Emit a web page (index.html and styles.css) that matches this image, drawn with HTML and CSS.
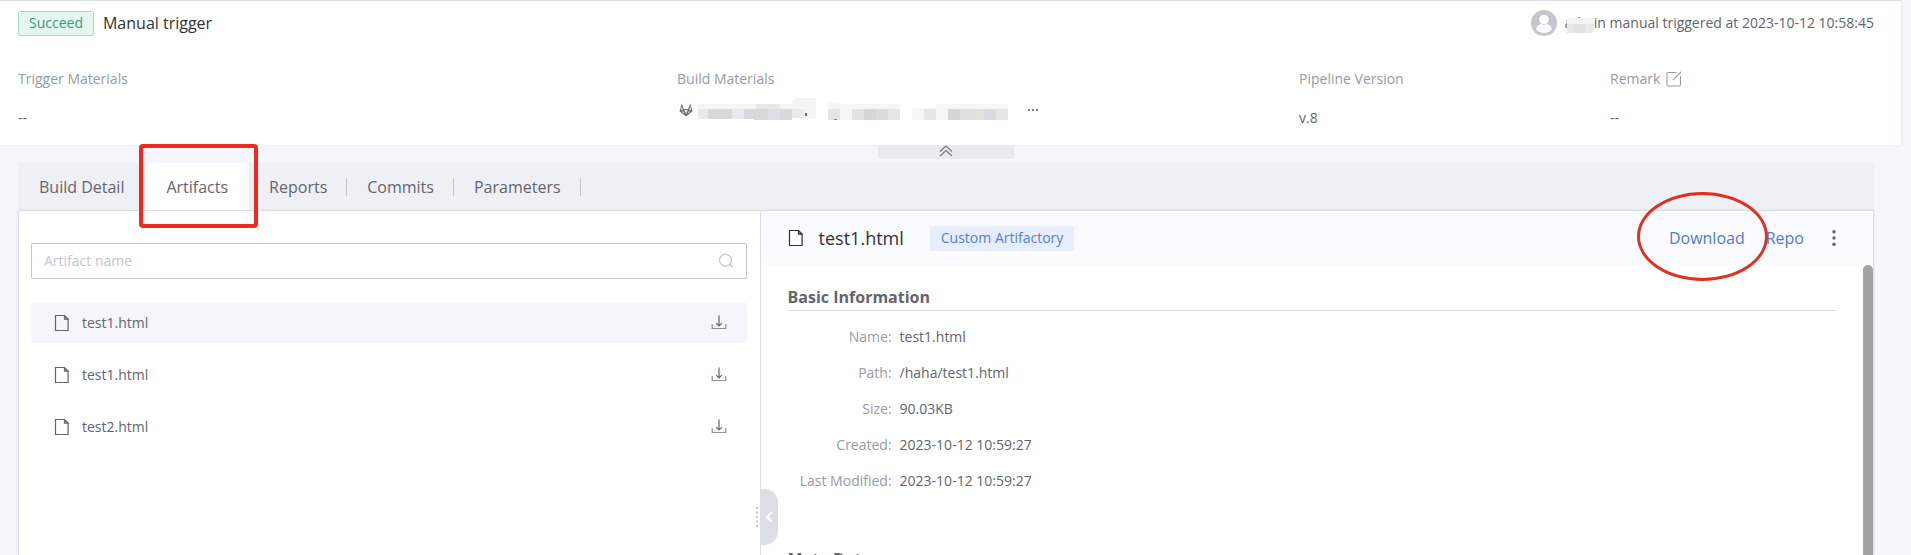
FILE: index.html
```html
<!DOCTYPE html>
<html lang="en">
<head>
<meta charset="utf-8">
<title>Build artifacts</title>
<link rel="stylesheet" href="styles.css">
</head>
<body>
<svg class="sprite" aria-hidden="true">
  <symbol id="file" viewBox="0 0 16 18"><path d="M1.500 1.500h9l3.600 3.600v11.400H1.500z" fill="none" stroke="currentColor" stroke-width="1.200"/><path d="M10.400 1.500v3.800h3.900z" fill="currentColor" fill-opacity=".6" stroke="currentColor" stroke-width="1"/></symbol>
  <symbol id="save" viewBox="0 0 16 16"><path d="M1.200 9v4.500h13.600V9" fill="none" stroke="currentColor" stroke-opacity=".7" stroke-width="1.200"/><path d="M8 .5v10.500M5.200 8.200 8 11l2.800-2.800" fill="none" stroke="currentColor" stroke-width="1.200"/></symbol>
</svg>
<header class="summary">
  <div class="summary-head">
    <span class="status">Succeed</span>
    <h1 class="title">Manual trigger</h1>
    <div class="user">
      <svg class="avatar" viewBox="0 0 26 26" aria-hidden="true"><circle cx="13" cy="13" r="13" fill="#c4c6cc"/><circle cx="13" cy="9.500" r="4.800" fill="#fff"/><path d="M5.300 19.500c0-4 3.200-5.300 5.200-5.300 1.500 1 3.500 1 5 0 2 0 5.200 1.300 5.200 5.300-2 2.300-4.700 3.400-7.700 3.400s-5.700-1.100-7.700-3.400z" fill="#fff"/></svg>
      <span class="user-text">admin manual triggered at 2023-10-12 10:58:45
        <svg class="name-mask" viewBox="0 0 27 15" aria-hidden="true"><path fill="#f4f4f5" d="M0 0h27v6H0z"/><path fill="#e9e9ea" d="M0 6h6v9H0zM18 6h9v7l-3 2h-6z"/><path fill="#e2e2e3" d="M6 6h12v9H6z"/></svg>
      </span>
    </div>
  </div>
  <dl class="facts">
    <div class="fact"><dt>Trigger Materials</dt><dd>--</dd></div>
    <div class="fact"><dt>Build Materials</dt>
      <dd class="repos">
        <svg class="fox" viewBox="0 0 14 14" aria-hidden="true"><path d="M2.800.5.500 8.200 7 13.500l6.500-5.300L11.200.5 9.200 6H4.800z" fill="#6c6e78"/><path d="M2.800 3.200 1.900 7l2 .3zM11.200 3.200l.9 3.800-2 .3zM5.200 7h3.600L7 11zM2.300 8.500l2 .1 1.300 2zM11.700 8.500l-2 .1-1.300 2z" fill="#e4e4e8"/></svg>
        <svg class="mosaic" viewBox="0 0 310 23" aria-hidden="true">
          <path fill="#f4f5f5" d="M0 6h94V3l4-3h20v21h-10l-2-1H0z"/><path fill="#e9e9ea" d="M0 11h10v10H0zM94 11h12v9H94z"/><path fill="#d8d8da" d="M10 11h24v10H10zM46 11h24v11H56l-1-1h-9zM82 11h12v11H82z"/><path fill="#e5eaed" d="M34 11h12v10H34z"/><path fill="#dcdfe5" d="M70 11h12v11H70z"/><path fill="#e9e8e7" d="M58 6h24v5H58z"/><path fill="#74666a" d="M107 15h2v3h-2z"/>
          <path fill="#f6f6f6" d="M130 4h12v2h60v16h-72z"/><path fill="#e4e5e7" d="M130 11h12v11h-12zM190 11h12v11h-12z"/><path fill="#e4e1de" d="M154 11h12v11h-12z"/><path fill="#d5d6da" d="M166 11h12v11h-12z"/><path fill="#dadbdd" d="M178 11h12v11h-12z"/><path fill="#88888c" d="M136 21h3v1h-3z"/>
          <path fill="#f6f6f6" d="M214 10h24V6h72v16h-96z"/><path fill="#e6e6e8" d="M226 11h12v11h-12zM298 11h12v11h-12z"/><path fill="#d6d6d9" d="M250 11h12v11h-12z"/><path fill="#dfe0e2" d="M262 11h12v11h-12z"/><path fill="#e3e0dd" d="M274 11h12v11h-12z"/><path fill="#d9dbe1" d="M286 11h12v11h-12z"/>
        </svg>
        <svg class="dots" viewBox="0 0 10 2" aria-hidden="true"><path fill="#7d7f88" d="M0 0h2v2H0zM4 0h2v2H4zM8 0h2v2H8z"/></svg>
      </dd></div>
    <div class="fact"><dt>Pipeline Version</dt><dd>v.8</dd></div>
    <div class="fact"><dt>Remark
      <button class="icon-button" aria-label="Edit remark"><svg class="edit" viewBox="0 0 16 16"><path d="M10.500 1.500H2.500a1.500 1.500 0 0 0-1.500 1.500v10.500A1.500 1.500 0 0 0 2.500 15h10.500a1.500 1.500 0 0 0 1.500-1.500V5M7 9.200 15 1" fill="none" stroke="currentColor" stroke-width="1.100"/></svg></button></dt><dd>--</dd></div>
  </dl>
</header>
<button class="fold" aria-label="Collapse summary"><svg class="chevrons" viewBox="0 0 14 12"><path d="M1 6.500 7 1l6 5.500M1 11 7 5.500 13 11" fill="none" stroke="currentColor" stroke-width="1.100"/></svg></button>
<main class="content">
  <nav class="tabs">
    <button class="tab">Build Detail</button>
    <button class="tab active">Artifacts</button>
    <button class="tab divided">Reports</button>
    <button class="tab divided">Commits</button>
    <button class="tab divided">Parameters</button>
  </nav>
  <div class="panes">
    <section class="list-pane">
      <label class="search">
        <input type="text" placeholder="Artifact name" aria-label="Artifact name">
        <svg class="search-icon" viewBox="0 0 16 16" aria-hidden="true"><circle cx="7.500" cy="7.200" r="6" fill="none" stroke="#c4c6cc" stroke-width="1.200"/><path d="m11.800 11.500 2.500 2.500" stroke="#c4c6cc" stroke-width="1.600"/></svg>
      </label>
      <ul class="files">
        <li class="file selected"><svg class="file-icon"><use href="#file"/></svg><span class="file-name">test1.html</span><button class="icon-button" aria-label="Download test1.html"><svg class="save"><use href="#save"/></svg></button></li>
        <li class="file"><svg class="file-icon"><use href="#file"/></svg><span class="file-name">test1.html</span><button class="icon-button" aria-label="Download test1.html"><svg class="save"><use href="#save"/></svg></button></li>
        <li class="file"><svg class="file-icon"><use href="#file"/></svg><span class="file-name">test2.html</span><button class="icon-button" aria-label="Download test2.html"><svg class="save"><use href="#save"/></svg></button></li>
      </ul>
    </section>
    <section class="detail-pane">
      <button class="handle" aria-label="Collapse list"><svg class="grip" viewBox="0 0 2 20"><path d="M1 0v20" stroke="#c4c6cc" stroke-width="2" stroke-dasharray="2 2.500"/></svg><svg class="arrow" viewBox="0 0 8 12"><path d="M6.500 1.500 2 6l4.500 4.500" fill="none" stroke="#fff" stroke-width="2"/></svg></button>
      <div class="detail-head">
        <svg class="file-icon"><use href="#file"/></svg>
        <h2 class="detail-title">test1.html</h2>
        <span class="tag">Custom Artifactory</span>
        <div class="actions">
          <a class="action marked" href="#download">Download</a>
          <a class="action" href="#repo">Repo</a>
          <button class="icon-button more" aria-label="More"><svg class="kebab" viewBox="0 0 4 16"><circle cx="2" cy="1.700" r="1.700"/><circle cx="2" cy="8" r="1.700"/><circle cx="2" cy="14.300" r="1.700"/></svg></button>
        </div>
      </div>
      <div class="detail-scroll">
        <div class="detail-body">
          <h3 class="section-title">Basic Information</h3>
          <dl class="props">
            <dt>Name:</dt><dd>test1.html</dd>
            <dt>Path:</dt><dd>/haha/test1.html</dd>
            <dt>Size:</dt><dd>90.03KB</dd>
            <dt>Created:</dt><dd>2023-10-12 10:59:27</dd>
            <dt>Last Modified:</dt><dd>2023-10-12 10:59:27</dd>
          </dl>
          <h3 class="section-title">Meta Data</h3>
        </div>
        <div class="scrollbar"></div>
      </div>
    </section>
  </div>
</main>
</body>
</html>
```

FILE: styles.css
```css
* { box-sizing: border-box; margin: 0; padding: 0; }
body {
  display: flex;
  flex-direction: column;
  height: 100vh;
  overflow: hidden;
  background: #f5f6fb;
  color: #63656e;
  font-family: "Open Sans", "Noto Sans", sans-serif;
  font-size: 14px;
  line-height: 20px;
}
button { border: 0; background: none; color: inherit; font: inherit; cursor: pointer; }
svg { display: block; flex: none; }
.sprite { position: absolute; width: 0; height: 0; }
.icon-button { display: flex; }

.summary {
  flex: none;
  height: 145px;
  margin-right: 10px;
  padding: 9px 27px 0 18px;
  border-top: 1px solid #dcdee5;
  background: #fff;
  box-shadow: 1px 0 2px #e6e8ee;
}
.summary-head { display: flex; align-items: center; height: 26px; }
.status {
  height: 25px;
  padding: 0 10px;
  border: 1px solid #a8dcc5;
  border-radius: 2px;
  background: #e5f6ef;
  color: #3a9e70;
  line-height: 22px;
}
.title { margin-left: 9px; color: #313238; font-size: 16px; font-weight: 400; }
.user { display: flex; align-items: center; gap: 8px; margin-left: auto; }
.avatar { width: 26px; height: 26px; }
.user-text { position: relative; }
.name-mask { position: absolute; top: 5px; left: 2px; width: 27px; height: 15px; }
.facts { display: grid; grid-template-columns: 659fr 622fr 311fr 264fr; margin-top: 33px; }
.fact dt { display: flex; align-items: center; gap: 6px; color: #979ba5; }
.fact dd { margin-top: 19px; }
.edit { width: 16px; height: 16px; }
.fact .repos { display: flex; align-items: center; margin-top: 9px; padding-left: 2px; }
.fox { width: 14px; height: 14px; margin-right: 5px; }
.mosaic { width: 310px; height: 23px; }
.dots { width: 10px; height: 2px; margin-left: 20px; }

.fold {
  display: flex;
  justify-content: center;
  flex: none;
  align-self: center;
  width: 136px;
  height: 14px;
  margin: 0 20px 4px 0;
  border-radius: 0 0 2px 2px;
  background: #e9eaf0;
  color: #737580;
}
.chevrons { width: 14px; height: 12px; }

.content { display: flex; flex-direction: column; flex: 1; min-height: 0; margin: 0 37px 0 18px; }
.tabs { display: flex; flex: none; height: 47px; background: #eff0f5; font-size: 16px; }
.tab { display: flex; align-items: center; padding: 0 21px; }
.tab.active { position: relative; border-radius: 4px 4px 0 0; background: #fff; }
.tab.active::after {
  content: "";
  position: absolute;
  inset: -19px -9px -18px -6px;
  border: 4px solid #ef2a1c;
  border-radius: 4px;
}
.tab.divided { padding: 0 0 0 20px; }
.tab.divided::after {
  content: "";
  width: 1px;
  height: 18px;
  margin-left: 19px;
  background: #c4c6cc;
}
.panes { display: flex; flex: 1; min-height: 0; border: 1px solid #dcdee5; border-bottom: 0; background: #fff; box-shadow: 0 0 2px #dcdee5; }
.list-pane { flex: 0 0 calc(40% - 1px); padding: 32px 13px 0 12px; }
.search { display: flex; align-items: center; height: 36px; padding: 0 12px; border: 1px solid #c4c6cc; border-radius: 2px; }
.search input { flex: 1; border: 0; outline: 0; background: none; color: inherit; font: inherit; }
.search input::placeholder { color: #c4c6cc; }
.search-icon { width: 16px; height: 16px; }
.files { display: flex; flex-direction: column; gap: 12px; margin-top: 24px; list-style: none; }
.file { display: flex; align-items: center; height: 40px; padding: 0 20px 0 23px; border-radius: 2px; }
.file.selected { background: #f5f6fb; }
.file-icon { width: 16px; height: 18px; }
.file-name { flex: 1; margin-left: 12px; }
.save { width: 16px; height: 16px; }

.detail-pane { position: relative; display: flex; flex-direction: column; flex: 1; min-width: 0; border-left: 1px solid #dcdee5; }
.detail-head { display: flex; align-items: center; flex: none; height: 54px; padding: 0 37px 0 27px; background: #fafbfe; color: #313238; }
.detail-title { margin-left: 15px; font-size: 18px; font-weight: 400; }
.tag { height: 25px; margin-left: 26px; padding: 0 11px; border-radius: 2px; background: #e6eeff; color: #5480d8; line-height: 24px; }
.actions { display: flex; align-items: center; gap: 21px; margin-left: auto; font-size: 16px; }
.action { color: #5079d9; text-decoration: none; }
.marked { position: relative; }
.marked::after {
  content: "";
  position: absolute;
  inset: -36px -23px -33px -32px;
  border: 3px solid #e03022;
  border-radius: 50%;
}
.more { margin-left: 7px; }
.kebab { width: 4px; height: 16px; fill: #63656e; }
.detail-scroll { display: flex; flex: 1; min-height: 0; overflow: hidden; }
.detail-body { flex: 1; padding: 20px 27px 0; }
.section-title { height: 26px; border-bottom: 1px solid #dcdee5; font-size: 16px; line-height: 24px; }
.props { display: grid; grid-template-columns: 104px 1fr; gap: 16px 8px; margin: 16px 0 56px; }
.props dt { color: #979ba5; text-align: right; }
.scrollbar { flex: none; width: 10px; border-radius: 5px 5px 0 0; background: #a3a3a3; }
.handle {
  position: absolute;
  top: 278px;
  left: -1px;
  display: flex;
  align-items: center;
  width: 18px;
  height: 56px;
  border-radius: 0 14px 14px 0;
  background: #dcdee5;
}
.grip { width: 2px; height: 20px; margin-left: -4px; }
.arrow { width: 8px; height: 12px; margin-left: 7px; }
```
